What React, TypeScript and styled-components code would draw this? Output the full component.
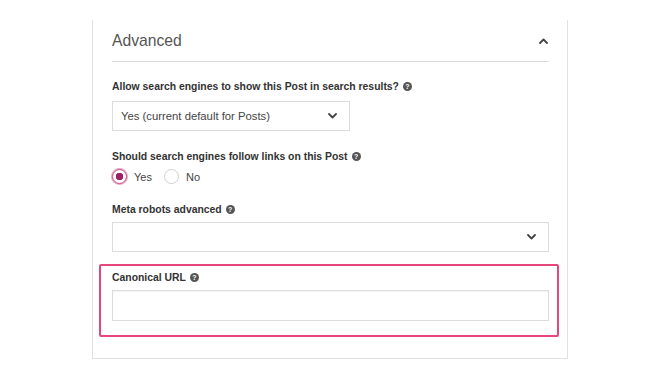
import React from "react";
import styled, { createGlobalStyle } from "styled-components";

const GlobalStyle = createGlobalStyle`
  body {
    margin: 0;
    background: #ffffff;
    font-family: "Liberation Sans", Arial, sans-serif;
  }
`;

export default function App() {
  return (
    <>
      <GlobalStyle />
      <Panel>
        <Header>
          <Title>Advanced</Title>
          <Chevron up />
        </Header>
        <Body>
          <Field>
            <Label>
              Allow search engines to show this Post in search results?
              <Help>?</Help>
            </Label>
            <Select width={238}>
              <SelectText>Yes (current default for Posts)</SelectText>
              <Chevron />
            </Select>
          </Field>
          <Field gap={6}>
            <Label>
              Should search engines follow links on this Post
              <Help>?</Help>
            </Label>
            <RadioRow>
              <RadioOption>
                <Radio checked />
                <RadioText>Yes</RadioText>
              </RadioOption>
              <RadioOption>
                <Radio />
                <RadioText>No</RadioText>
              </RadioOption>
            </RadioRow>
          </Field>
          <Field gap={6} space={12}>
            <Label>
              Meta robots advanced
              <Help>?</Help>
            </Label>
            <Select>
              <SelectText />
              <Chevron />
            </Select>
          </Field>
          <Highlight>
            <Field gap={6} space={0}>
              <Label>
                Canonical URL
                <Help>?</Help>
              </Label>
              <TextInput />
            </Field>
          </Highlight>
        </Body>
      </Panel>
    </>
  );
}

function Chevron({ up }: { up?: boolean }) {
  return (
    <ChevronIcon width="9" height="6" viewBox="0 0 9 6">
      <path
        d={up ? "M1 5 L4.5 1.5 L8 5" : "M1 1 L4.5 4.5 L8 1"}
        fill="none"
        stroke="#444"
        strokeWidth="1.8"
        strokeLinecap="round"
        strokeLinejoin="round"
      />
    </ChevronIcon>
  );
}

const Panel = styled.div`
  box-sizing: border-box;
  width: 476px;
  margin: 20px 0 0 92px;
  padding: 0 18px 21px 19px;
  border: 1px solid #e1e1e1;
  border-top: none;
`;

const Header = styled.div`
  height: 41px;
  display: flex;
  align-items: center;
  justify-content: space-between;
  padding-right: 1px;
  border-bottom: 1px solid #dcdcdc;
`;

const Title = styled.h2`
  margin: 0;
  font-size: 15.7px;
  font-weight: 400;
  color: #555;
`;

const ChevronIcon = styled.svg`
  display: block;
  flex-shrink: 0;
`;

const Body = styled.div`
  padding-top: 17px;
  display: flex;
  flex-direction: column;
`;

const Field = styled.div<{ gap?: number; space?: number }>`
  display: flex;
  flex-direction: column;
  gap: ${(p) => p.gap ?? 8}px;
  margin-bottom: ${(p) => p.space ?? 18}px;
`;

const Label = styled.div`
  display: flex;
  align-items: center;
  gap: 4px;
  height: 14px;
  font-size: 10.4px;
  font-weight: 700;
  color: #333;
`;

const Help = styled.span`
  display: inline-flex;
  align-items: center;
  justify-content: center;
  width: 9px;
  height: 9px;
  border-radius: 50%;
  background: #555;
  color: #fff;
  font-size: 7px;
  font-weight: 700;
  line-height: 1;
`;

const Select = styled.div<{ width?: number }>`
  box-sizing: border-box;
  width: ${(p) => (p.width ? `${p.width}px` : "100%")};
  height: 30px;
  display: flex;
  align-items: center;
  justify-content: space-between;
  padding: 0 12px 0 8px;
  border: 1px solid #dcdcdc;
  background: #fff;
`;

const SelectText = styled.span`
  font-size: 11.3px;
  color: #444;
`;

const RadioRow = styled.div`
  display: flex;
  align-items: center;
  gap: 12px;
  height: 15px;
`;

const RadioOption = styled.label`
  display: flex;
  align-items: center;
  gap: 7px;
`;

const Radio = styled.span<{ checked?: boolean }>`
  box-sizing: border-box;
  width: 15px;
  height: 15px;
  border-radius: 50%;
  border: 1px solid ${(p) => (p.checked ? "#c2407d" : "#cfcfcf")};
  background: ${(p) =>
    p.checked ? "radial-gradient(circle, #9e1f66 0 3.5px, #fff 4px)" : "#fff"};
  box-shadow: ${(p) => (p.checked ? "0 0 0 1px #e9a7c6" : "none")};
`;

const RadioText = styled.span`
  font-size: 11px;
  color: #444;
`;

const Highlight = styled.div`
  margin: 0 -10px 0 -13px;
  padding: 4px 8px 14px 11px;
  border: 2px solid #e6467d;
  border-radius: 2px;
`;

const TextInput = styled.div`
  box-sizing: border-box;
  height: 31px;
  border: 1px solid #dcdcdc;
  box-shadow: inset 0 1px 2px rgba(0, 0, 0, 0.05);
`;
